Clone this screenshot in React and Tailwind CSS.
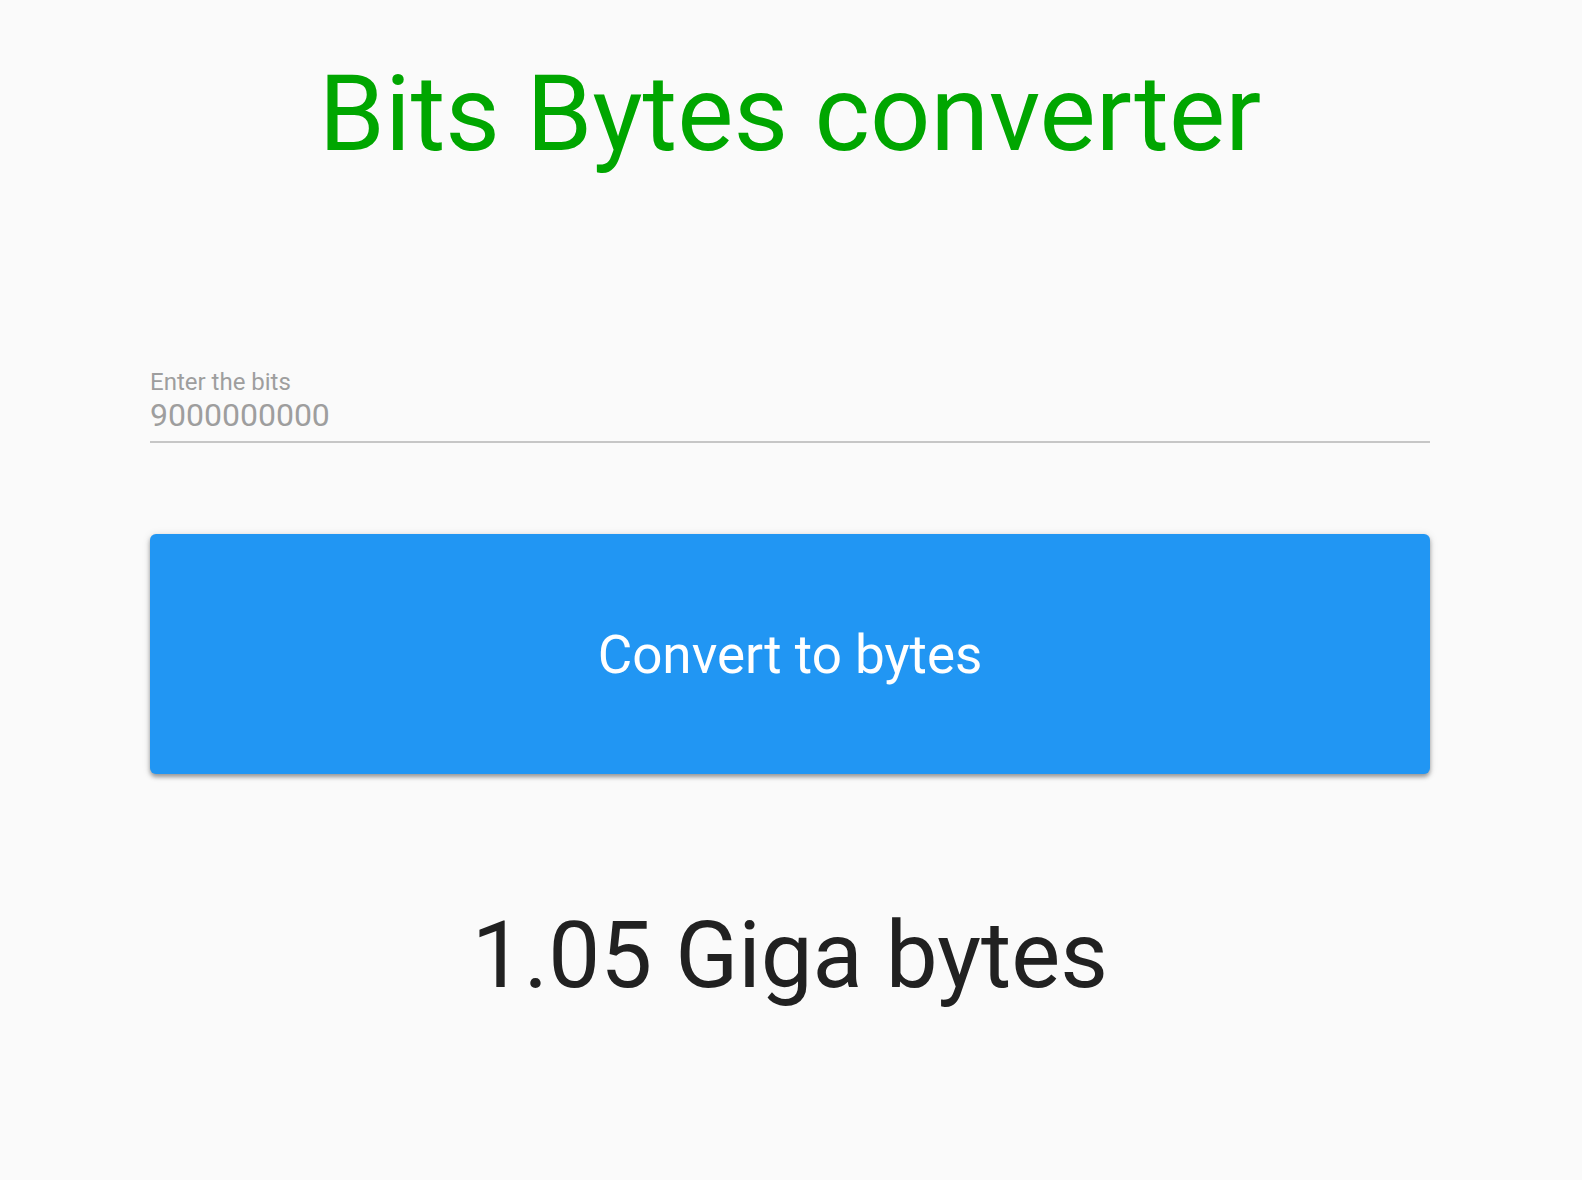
export default function App() {
  return (
    <div className="min-h-screen bg-[#fafafa] font-['Roboto',sans-serif]">
      <div className="flex flex-col pl-[150px] pr-[152px]">
        {/* Title */}
        <h1 className="pt-[53px] text-center text-[106px] leading-[123px] font-normal text-[#00a600]">
          Bits Bytes converter
        </h1>

        {/* Input field */}
        <div className="mt-[192px] border-b-2 border-[#c6c6c6] pb-[7px]">
          <div className="text-[24px] leading-[28px] text-[#9e9e9e]">Enter the bits</div>
          <input
            className="block w-full bg-transparent p-0 text-[32px] leading-[38px] text-[#9e9e9e] outline-none"
            defaultValue="9000000000"
          />
        </div>

        {/* Convert button */}
        <button className="mt-[91px] h-[240px] w-full rounded-[6px] bg-[#2196f3] pt-[4px] text-[53px] text-white shadow-[0_3px_4px_rgba(0,0,0,0.35),0_1px_8px_rgba(0,0,0,0.12)]">
          Convert to bytes
        </button>

        {/* Result */}
        <p className="mt-[127px] text-center text-[92.5px] leading-[109px] text-[#212121]">
          1.05 Giga bytes
        </p>
      </div>
    </div>
  );
}
